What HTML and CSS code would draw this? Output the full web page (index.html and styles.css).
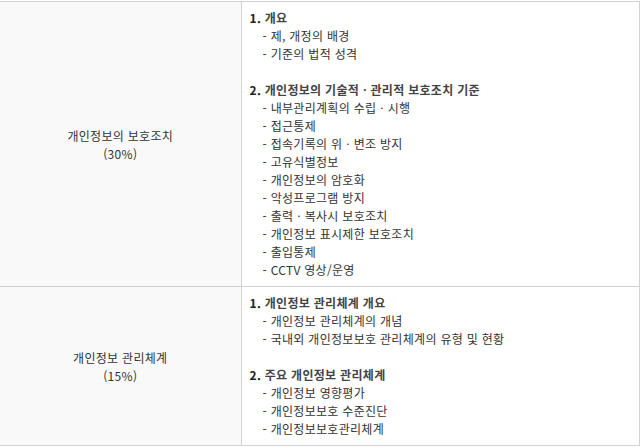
FILE: index.html
```html
<!DOCTYPE html>
<html lang="ko">
<head>
<meta charset="utf-8">
<link rel="stylesheet" href="styles.css">
</head>
<body>
<table class="curri">
  <tr>
    <th class="subject">개인정보의 보호조치<br>(30%)</th>
    <td class="detail">
      <p class="head"><span class="num">1.</span> 개요</p>
      <ul>
        <li>- 제, 개정의 배경</li>
        <li>- 기준의 법적 성격</li>
      </ul>
      <p class="head gap"><span class="num">2.</span> 개인정보의 기술적ㆍ관리적 보호조치 기준</p>
      <ul>
        <li>- 내부관리계획의 수립ㆍ시행</li>
        <li>- 접근통제</li>
        <li>- 접속기록의 위ㆍ변조 방지</li>
        <li>- 고유식별정보</li>
        <li>- 개인정보의 암호화</li>
        <li>- 악성프로그램 방지</li>
        <li>- 출력ㆍ복사시 보호조치</li>
        <li>- 개인정보 표시제한 보호조치</li>
        <li>- 출입통제</li>
        <li>- CCTV 영상/운영</li>
      </ul>
    </td>
  </tr>
  <tr>
    <th class="subject">개인정보 관리체계<br>(15%)</th>
    <td class="detail">
      <p class="head"><span class="num">1.</span> 개인정보 관리체계 개요</p>
      <ul>
        <li>- 개인정보 관리체계의 개념</li>
        <li>- 국내외 개인정보보호 관리체계의 유형 및 현황</li>
      </ul>
      <p class="head gap"><span class="num">2.</span> 주요 개인정보 관리체계</p>
      <ul>
        <li>- 개인정보 영향평가</li>
        <li>- 개인정보보호 수준진단</li>
        <li>- 개인정보보호관리체계</li>
      </ul>
    </td>
  </tr>
</table>
</body>
</html>
```

FILE: styles.css
```css
html, body {
  margin: 0;
  padding: 0;
  background: #fff;
}
body {
  padding-top: 1px;
  font-family: "Malgun Gothic", "Noto Sans CJK KR", "Noto Sans", sans-serif;
  font-size: 12px;
  line-height: 18px;
  letter-spacing: 0.3px;
  color: #333;
}
.curri {
  width: 640px;
  border-collapse: collapse;
  border-top: 1px solid #d2d2d2;
  border-right: 1px solid #d2d2d2;
}
.curri tr {
  border-bottom: 1px solid #d2d2d2;
}
.subject {
  width: 241px;
  box-sizing: border-box;
  background: #f9f9f9;
  border-right: 1px solid #d2d2d2;
  font-weight: normal;
  text-align: center;
  vertical-align: middle;
  padding: 2px 0 0 0;
}
.detail {
  padding: 7px 8px 7px 8px;
  vertical-align: top;
}
.head {
  margin: 0;
  font-weight: bold;
  color: #444;
}
.head .num {
  color: #222;
}
.head.gap {
  margin-top: 18px;
}
ul {
  list-style: none;
  margin: 0;
  padding: 0 0 0 13px;
}
li {
  margin: 0;
}
```
